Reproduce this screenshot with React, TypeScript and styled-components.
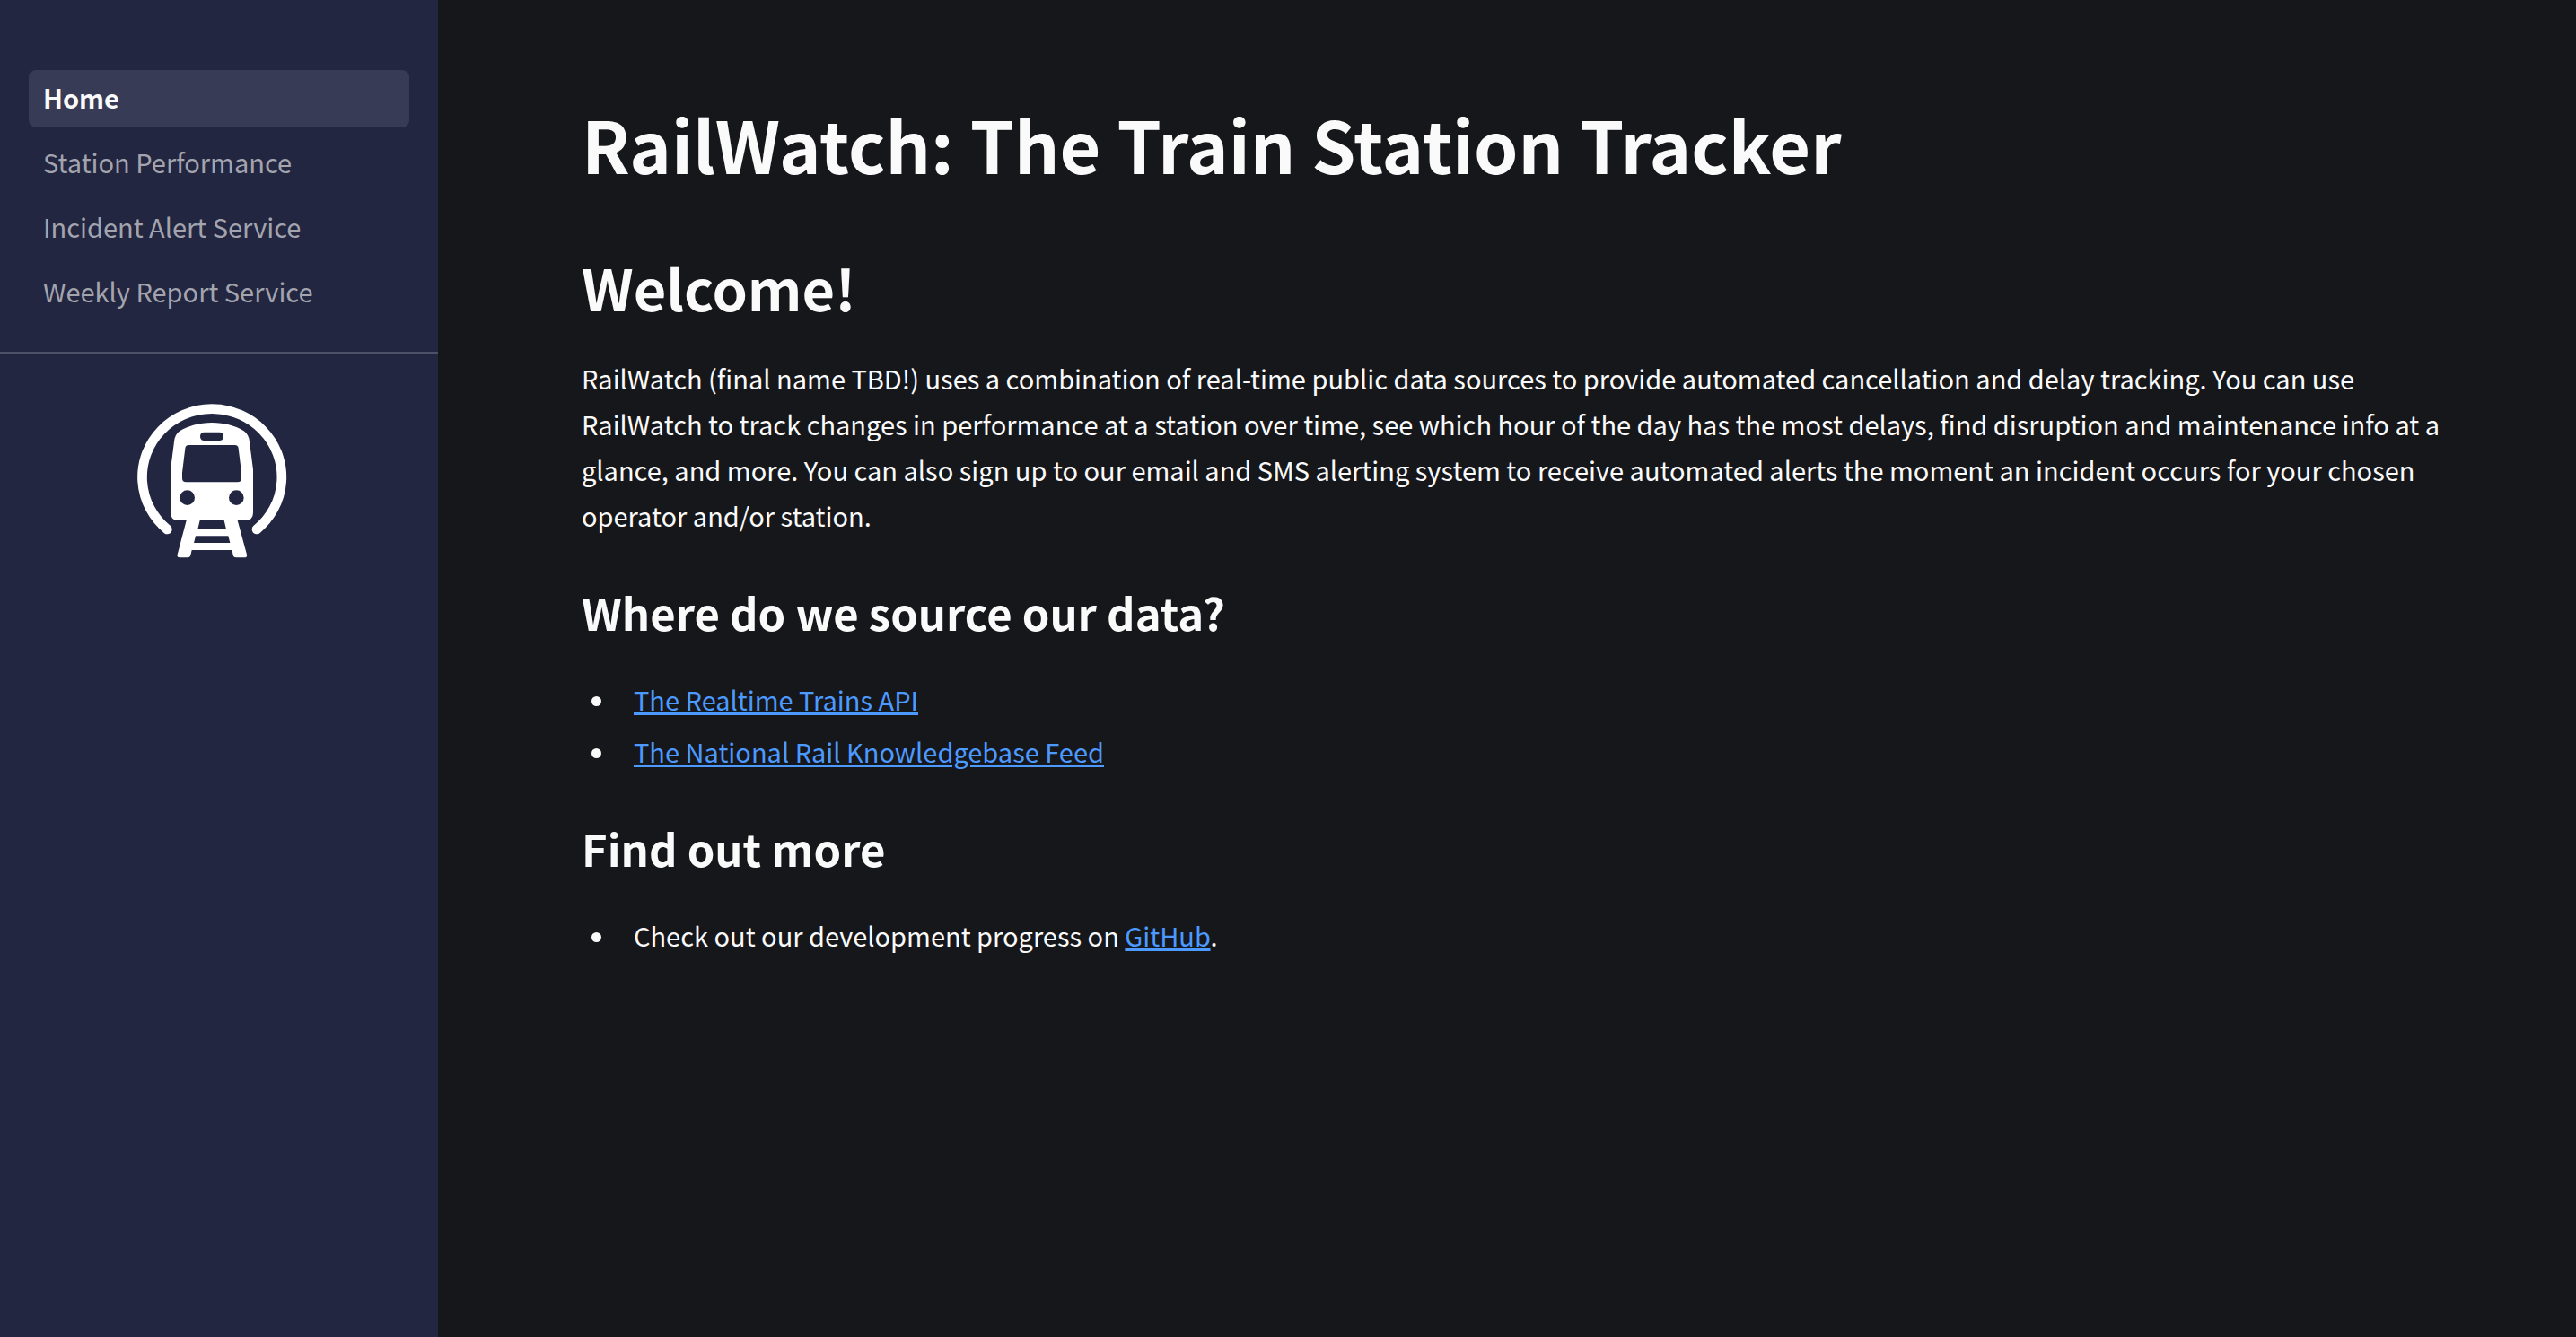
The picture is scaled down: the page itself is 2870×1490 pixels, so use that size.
import React from "react";
import styled, { createGlobalStyle } from "styled-components";

const GlobalStyle = createGlobalStyle`
  *, *::before, *::after { box-sizing: border-box; }
  body {
    margin: 0;
    background: #16171b;
    color: #fafafa;
    font-family: "Source Sans Pro", "Noto Sans CJK SC", "Noto Sans", sans-serif;
    font-size: 29px;
    line-height: 51px;
  }
`;

const Shell = styled.div`
  display: flex;
  min-height: 100vh;
`;

const Sidebar = styled.aside`
  flex: 0 0 488px;
  background: #222640;
`;

const Nav = styled.nav`
  display: flex;
  flex-direction: column;
  gap: 8px;
  padding: 78px 32px 34px;
  border-bottom: 2px solid #4d5067;
`;

const NavLink = styled.a<{ $active?: boolean }>`
  padding: 0 16px 4px;
  border-radius: 8px;
  line-height: 60px;
  text-decoration: none;
  color: ${(p) => (p.$active ? "#fafafa" : "#a3a4ae")};
  background: ${(p) => (p.$active ? "#383b55" : "transparent")};
  font-weight: ${(p) => (p.$active ? 700 : 400)};
`;

const LogoArea = styled.div`
  padding: 36px 130px;
`;

const Logo = styled.svg`
  display: block;
  width: 210px;
  height: 210px;
`;

const Main = styled.main`
  flex: 1;
  min-width: 0;
  padding: 107px 140px 160px 160px;
`;

const Title = styled.h1`
  margin: 0 0 64px;
  font-size: 79px;
  line-height: 106px;
  font-weight: 700;
`;

const Heading = styled.h2`
  margin: 0 0 33px;
  font-size: 63px;
  line-height: 86px;
  font-weight: 600;
`;

const Subheading = styled.h3`
  margin: 48px 0 38px;
  font-size: 49px;
  line-height: 68px;
  font-weight: 600;
`;

const Paragraph = styled.p`
  margin: 0;
`;

const List = styled.ul`
  display: flex;
  flex-direction: column;
  gap: 7px;
  margin: 0;
  padding: 0 0 0 40px;
`;

const Item = styled.li`
  padding-left: 18px;
`;

const Link = styled.a`
  color: #4c9aff;
  text-decoration: underline;
  text-decoration-thickness: 3px;
  text-underline-offset: 2px;
`;

const pages = [
  "Home",
  "Station Performance",
  "Incident Alert Service",
  "Weekly Report Service",
];

function TrainLogo() {
  return (
    <Logo viewBox="0 0 630 630" role="img" aria-label="RailWatch">
      <path
        d="M169 480A233 228 0 1 1 468 480"
        fill="none"
        stroke="#fff"
        strokeWidth="32"
        strokeLinecap="round"
      />
      <path
        fill="#fff"
        fillRule="evenodd"
        d="M318 123C360 123 398 134 425 151C437 159 443 172 444 187L456 280V424Q456 450 430 450H206Q180 450 180 424V280L192 187C193 172 199 159 211 151C238 134 276 123 318 123ZM292 155Q279 155 279 169Q279 183 292 183H343Q357 183 357 169Q357 155 343 155ZM241 198Q230 198 229 209L219 290V309Q219 322 232 322H404Q417 322 417 309V290L407 209Q406 198 395 198ZM236 349A25 25 0 1 0 236 399A25 25 0 1 0 236 349ZM400 349A25 25 0 1 0 400 399A25 25 0 1 0 400 349Z"
      />
      <path
        fill="#fff"
        fillRule="evenodd"
        d="M234 446H403L435 564Q437 574 427 574H399Q391 574 389 567L386 549H251L247 567Q245 574 237 574H210Q200 574 203 564ZM278 450L271 479H366L359 450ZM264 502L258 525H379L373 502Z"
      />
    </Logo>
  );
}

export default function App() {
  return (
    <>
      <GlobalStyle />
      <Shell>
        <Sidebar>
          <Nav aria-label="Pages">
            {pages.map((page, i) => (
              <NavLink
                key={page}
                href="#"
                $active={i === 0}
                aria-current={i === 0 ? "page" : undefined}
              >
                {page}
              </NavLink>
            ))}
          </Nav>
          <LogoArea>
            <TrainLogo />
          </LogoArea>
        </Sidebar>
        <Main>
          <Title>RailWatch: The Train Station Tracker</Title>
          <Heading>Welcome!</Heading>
          <Paragraph>
            RailWatch (final name TBD!) uses a combination of real-time public
            data sources to provide automated cancellation and delay tracking.
            You can use RailWatch to track changes in performance at a station
            over time, see which hour of the day has the most delays, find
            disruption and maintenance info at a glance, and more. You can also
            sign up to our email and SMS alerting system to receive automated
            alerts the moment an incident occurs for your chosen operator and/or
            station.
          </Paragraph>
          <Subheading>Where do we source our data?</Subheading>
          <List>
            <Item>
              <Link href="#">The Realtime Trains API</Link>
            </Item>
            <Item>
              <Link href="#">The National Rail Knowledgebase Feed</Link>
            </Item>
          </List>
          <Subheading>Find out more</Subheading>
          <List>
            <Item>
              Check out our development progress on <Link href="#">GitHub</Link>.
            </Item>
          </List>
        </Main>
      </Shell>
    </>
  );
}
